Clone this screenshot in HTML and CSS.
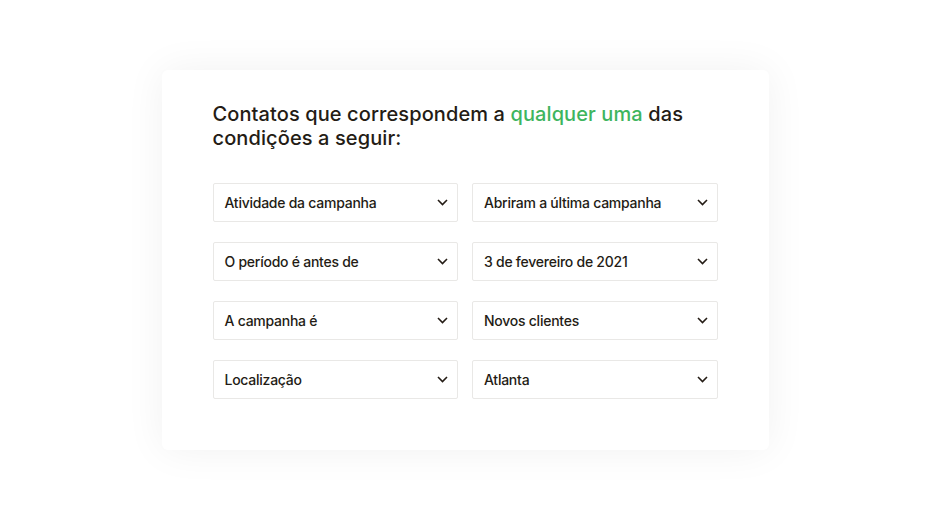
FILE: index.html
```html
<!DOCTYPE html>
<html lang="pt">
<head>
<meta charset="utf-8">
<link rel="stylesheet" href="styles.css">
</head>
<body>
<div class="page">
  <div class="card">
    <h1 class="title">Contatos que correspondem a <span class="accent">qualquer uma</span> das condições a seguir:</h1>
    <div class="grid">
      <div class="select"><span>Atividade da campanha</span><svg class="chev" viewBox="0 0 11 7" width="11" height="7"><path d="M1 1l4.5 4.5 4.5-4.5"/></svg></div>
      <div class="select"><span>Abriram a última campanha</span><svg class="chev" viewBox="0 0 11 7" width="11" height="7"><path d="M1 1l4.5 4.5 4.5-4.5"/></svg></div>
      <div class="select"><span>O período é antes de</span><svg class="chev" viewBox="0 0 11 7" width="11" height="7"><path d="M1 1l4.5 4.5 4.5-4.5"/></svg></div>
      <div class="select"><span>3 de fevereiro de 2021</span><svg class="chev" viewBox="0 0 11 7" width="11" height="7"><path d="M1 1l4.5 4.5 4.5-4.5"/></svg></div>
      <div class="select"><span>A campanha é</span><svg class="chev" viewBox="0 0 11 7" width="11" height="7"><path d="M1 1l4.5 4.5 4.5-4.5"/></svg></div>
      <div class="select"><span>Novos clientes</span><svg class="chev" viewBox="0 0 11 7" width="11" height="7"><path d="M1 1l4.5 4.5 4.5-4.5"/></svg></div>
      <div class="select"><span>Localização</span><svg class="chev" viewBox="0 0 11 7" width="11" height="7"><path d="M1 1l4.5 4.5 4.5-4.5"/></svg></div>
      <div class="select"><span>Atlanta</span><svg class="chev" viewBox="0 0 11 7" width="11" height="7"><path d="M1 1l4.5 4.5 4.5-4.5"/></svg></div>
    </div>
  </div>
</div>
</body>
</html>
```
FILE: styles.css
```css
html, body {
  margin: 0;
  padding: 0;
  background: #ffffff;
}
body {
  font-family: Inter, "Noto Sans", "Liberation Sans", sans-serif;
  color: #241c15;
}
.page {
  width: 930px;
  height: 522px;
  padding-top: 70px;
  box-sizing: border-box;
}
.card {
  width: 607px;
  height: 380px;
  margin: 0 auto;
  box-sizing: border-box;
  background: #ffffff;
  border-radius: 6px;
  box-shadow: 0 0 40px rgba(0, 0, 0, 0.06);
  padding: 32px 51px 51px 51px;
}
.title {
  margin: 0;
  font-size: 20px;
  font-weight: 500;
  line-height: 24px;
  letter-spacing: 0.1px;
  color: #241c15;
}
.accent {
  color: #3eb55e;
}
.grid {
  margin-top: 33px;
  display: grid;
  grid-template-columns: 1fr 1fr;
  column-gap: 14px;
  row-gap: 20px;
}
.select {
  height: 39px;
  box-sizing: border-box;
  border: 1px solid #e9e8e6;
  border-radius: 2px;
  display: flex;
  align-items: center;
  justify-content: space-between;
  padding: 0 9px 0 11px;
  font-size: 14px;
  font-weight: 500;
  letter-spacing: -0.25px;
  color: #241c15;
}
.chev {
  fill: none;
  stroke: #241c15;
  stroke-width: 1.6;
}
```
